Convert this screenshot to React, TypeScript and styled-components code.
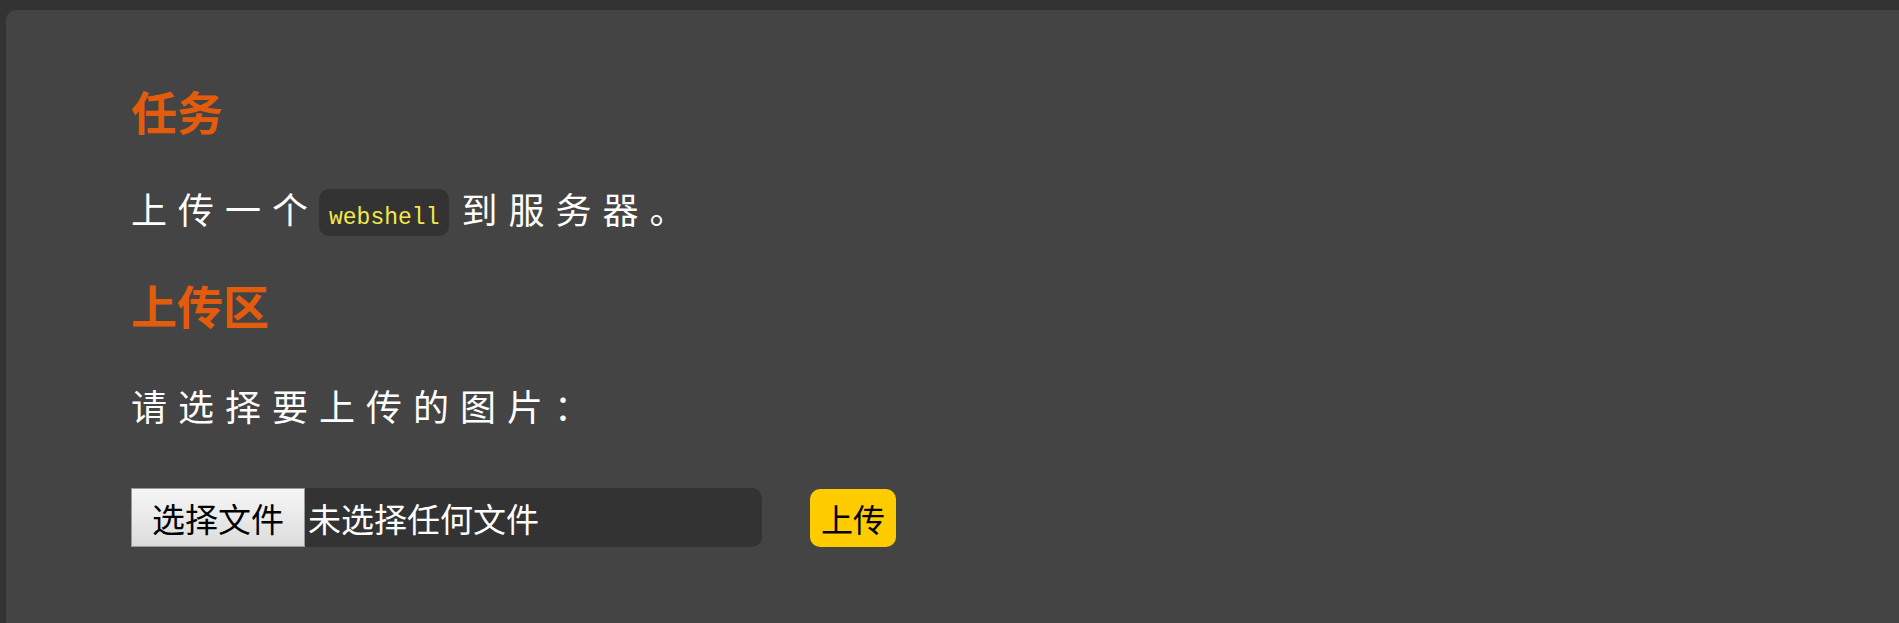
import React from 'react';
import styled, { createGlobalStyle } from 'styled-components';

const GlobalStyle = createGlobalStyle`
  html, body {
    margin: 0;
    padding: 0;
    background: #333333;
    overflow: hidden;
  }

  body {
    font-family: "Noto Sans CJK SC", "Noto Sans", sans-serif;
    color: #ffffff;
  }
`;

const Page = styled.div`
  display: flex;
  flex-direction: column;
  height: 100vh;
  padding: 10px 0 0 6px;
  box-sizing: border-box;
`;

const Card = styled.main`
  flex: 1;
  background: #444444;
  border-radius: 10px 0 0 0;
  padding: 72px 0 0 125px;
  box-sizing: border-box;
`;

const Title = styled.h2<{ $top: number }>`
  margin: ${(p) => p.$top}px 0 0;
  font-size: 46px;
  line-height: 56px;
  font-weight: 700;
  color: #e35b0c;
`;

const Text = styled.p<{ $top: number }>`
  margin: ${(p) => p.$top}px 0 0;
  font-size: 36px;
  line-height: 50px;
  letter-spacing: 11px;
  color: #ffffff;
`;

const Code = styled.code`
  display: inline-block;
  margin-right: 12px;
  padding: 14px 10px 3px;
  line-height: 30px;
  font-family: "Liberation Mono", "DejaVu Sans Mono", monospace;
  font-size: 23px;
  letter-spacing: 0;
  color: #f2e84a;
  background: #333333;
  border-radius: 10px;
`;

const UploadRow = styled.form`
  display: flex;
  align-items: center;
  gap: 48px;
  margin-top: 58px;
`;

const FilePicker = styled.label`
  display: flex;
  align-items: center;
  width: 631px;
  height: 59px;
  background: #333333;
  border-radius: 0 10px 10px 0;
  font-size: 33px;
  cursor: pointer;
`;

const PickButton = styled.span`
  display: flex;
  align-items: center;
  height: 59px;
  padding: 0 20px;
  box-sizing: border-box;
  color: #000000;
  background: linear-gradient(#f6f6f6, #dcdcdc);
  border: 1px solid #9a9a9a;
`;

const FileName = styled.span`
  margin-left: 3px;
  color: #ffffff;
`;

const UploadButton = styled.button`
  height: 58px;
  padding: 0 11px;
  border: none;
  border-radius: 10px;
  background: #ffcc00;
  color: #000000;
  font-family: "Noto Sans CJK SC", "Noto Sans", sans-serif;
  font-size: 32px;
  cursor: pointer;
`;

const App = () => {
  return (
    <>
      <GlobalStyle />
      <Page>
        <Card>
          <Title $top={0}>任务</Title>
          <Text $top={45}>
            上传一个<Code>webshell</Code>到服务器。
          </Text>
          <Title $top={40}>上传区</Title>
          <Text $top={48}>请选择要上传的图片：</Text>
          <UploadRow onSubmit={(e) => e.preventDefault()}>
            <FilePicker>
              <PickButton>选择文件</PickButton>
              <FileName>未选择任何文件</FileName>
            </FilePicker>
            <UploadButton type="submit">上传</UploadButton>
          </UploadRow>
        </Card>
      </Page>
    </>
  );
};

export default App;
